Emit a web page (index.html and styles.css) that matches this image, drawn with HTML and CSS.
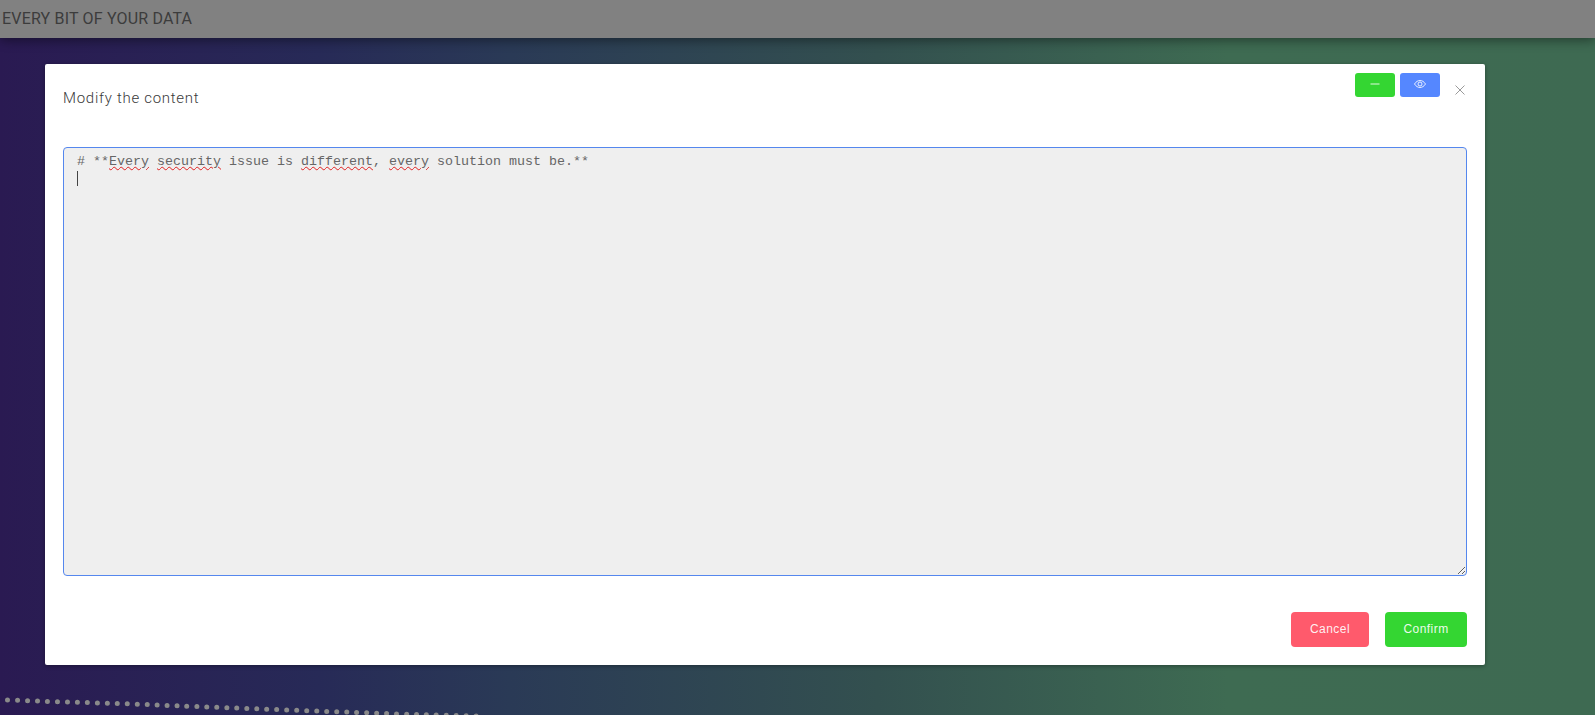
FILE: index.html
```html
<!DOCTYPE html>
<html lang="en">
<head>
<meta charset="utf-8">
<title>Modify the content</title>
<link rel="stylesheet" href="styles.css">
</head>
<body>
<header class="topbar">EVERY BIT OF YOUR DATA</header>
<svg class="dots" width="500" height="30" viewBox="0 0 500 30" aria-hidden="true">
  <path d="M7.5 15 C 60 17 110 18 157.5 20 S 290 25 357 27.500 S 420 29.500 480 31"/>
</svg>
<main class="stage">
  <section class="modal">
    <div class="modal-head">
      <h1 class="modal-title">Modify the content</h1>
      <div class="head-actions">
        <button class="btn-icon btn-green" type="button" aria-label="Minimise">
          <svg width="12" height="12" viewBox="0 0 12 12"><path d="M1.500 6H10.500" class="ico"/></svg>
        </button>
        <button class="btn-icon btn-blue" type="button" aria-label="Preview">
          <svg width="14" height="12" viewBox="0 0 14 12"><path d="M1.500 6C3 3.600 5 2.500 7 2.500S11 3.600 12.500 6C11 8.400 9 9.500 7 9.500S3 8.400 1.500 6Z" class="ico"/><circle cx="7" cy="6" r="2" class="ico"/></svg>
        </button>
        <button class="btn-close" type="button" aria-label="Close">
          <svg width="12" height="12" viewBox="0 0 12 12"><path d="M1.500 1.500L10.500 10.500M10.500 1.500L1.500 10.500" class="ico-close"/></svg>
        </button>
      </div>
    </div>
    <div class="editor">
      <div class="editor-line"># **<span class="typo">Every</span> <span class="typo">security</span> issue is <span class="typo">different</span>, <span class="typo">every</span> solution must be.**</div>
      <div class="editor-line"><span class="caret"></span></div>
    </div>
    <div class="modal-foot">
      <button class="btn btn-cancel" type="button">Cancel</button>
      <button class="btn btn-confirm" type="button">Confirm</button>
    </div>
  </section>
</main>
</body>
</html>
```
FILE: styles.css
```css
* { box-sizing: border-box; }
html, body { margin: 0; height: 100%; }
body {
  position: relative;
  width: 1595px;
  height: 715px;
  overflow: hidden;
  background: linear-gradient(90deg, #2a1a52 0%, #272a57 20%, #2a3a56 32%, #33504f 55%, #3e6b52 77%, #3e6a52 100%);
  font-family: "Liberation Sans", sans-serif;
}
.topbar {
  height: 38px;
  background: #818181;
  color: #3c3c3c;
  font-family: Roboto, sans-serif;
  font-size: 16px;
  letter-spacing: .18px;
  line-height: 38px;
  padding-left: 2px;
  box-shadow: 0 2px 12px rgba(0, 0, 0, .45);
  position: relative;
}
.dots { position: absolute; left: 0; bottom: 0; }
.dots path {
  fill: none;
  stroke: #8a8a8a;
  stroke-width: 5;
  stroke-linecap: round;
  stroke-dasharray: 0 9.980;
}
.stage { padding: 26px 0 0 45px; position: relative; }
.modal {
  width: 1440px;
  height: 601px;
  background: #fff;
  border-radius: 2px;
  box-shadow: 0 1px 4px rgba(0, 0, 0, .35);
  padding: 9px 18px 18px;
  display: flex;
  flex-direction: column;
}
.modal-head {
  height: 74px;
  display: flex;
  justify-content: space-between;
  align-items: flex-start;
}
.modal-title {
  margin: 15px 0 0;
  font-family: Roboto, sans-serif;
  font-weight: 300;
  font-size: 15px;
  letter-spacing: .72px;
  line-height: 20px;
  color: #3a3a3a;
}
.head-actions { display: flex; gap: 5px; }
.btn-icon {
  width: 40px;
  height: 24px;
  border: 0;
  border-radius: 3px;
  padding: 0 0 3px;
  display: flex;
  align-items: center;
  justify-content: center;
}
.btn-green { background: #34d632; }
.btn-blue { background: #5587ff; }
.ico { fill: none; stroke: #fff; stroke-width: 1; opacity: .85; }
.btn-close {
  width: 14px;
  height: 14px;
  border: 0;
  padding: 0;
  background: none;
  margin: 10px 0 0 8px;
  display: flex;
  align-items: center;
  justify-content: center;
}
.ico-close { fill: none; stroke: #9a9a9a; stroke-width: 1; }
.editor {
  width: 1404px;
  height: 429px;
  background: #efefef;
  border: 1px solid #5587ee;
  border-radius: 4px;
  padding: 5px 13px;
  font-family: "Liberation Mono", monospace;
  font-size: 13.330px;
  line-height: 18px;
  color: #666;
  overflow: auto;
  resize: both;
}
.editor-line { white-space: pre; height: 18px; }
.typo {
  text-decoration: underline wavy #e02020 1px;
  text-underline-offset: 1px;
}
.caret {
  display: inline-block;
  width: 1px;
  height: 15px;
  background: #444;
  vertical-align: -3px;
}
.modal-foot {
  margin-top: 36px;
  display: flex;
  justify-content: flex-end;
  gap: 16px;
}
.btn {
  height: 35px;
  border: 0;
  border-radius: 4px;
  color: rgba(255, 255, 255, .92);
  font-family: "Liberation Sans", sans-serif;
  font-size: 12px;
  letter-spacing: .45px;
  padding: 0 0 2px;
}
.btn-cancel { width: 78px; background: #ff5a6c; }
.btn-confirm { width: 82px; background: #34d632; }
```
